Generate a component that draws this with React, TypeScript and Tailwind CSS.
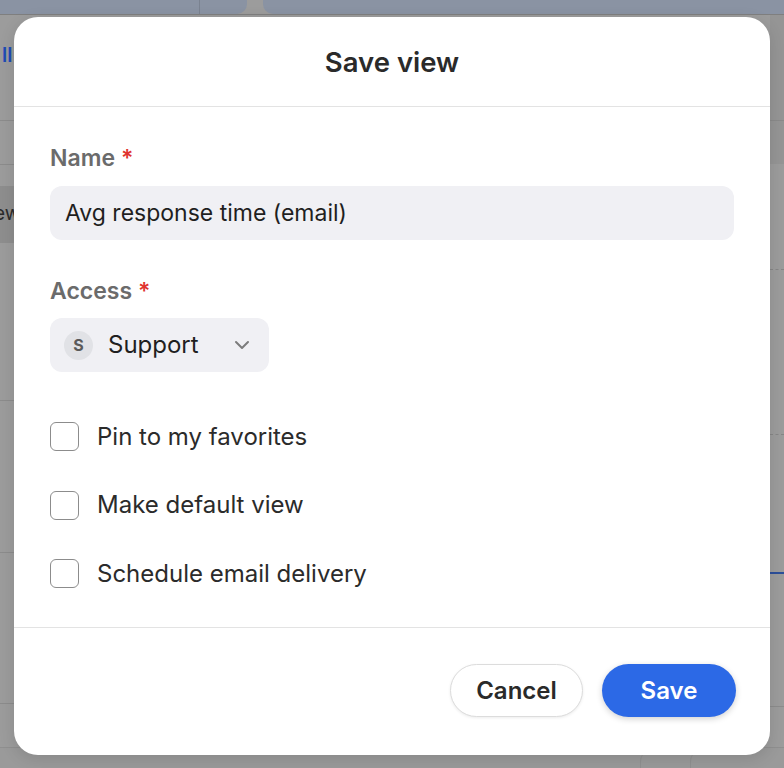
import { ChevronDown } from "lucide-react";

const font = { fontFamily: "Inter, 'Noto Sans', sans-serif" };

function Backdrop() {
  return (
    <div className="absolute inset-0">
      {/* top toolbar strip */}
      <div className="flex h-[15px] gap-[16px] border-b border-[#7f7f7f] bg-[#9c9c9c]">
        <div className="flex w-[247px] rounded-br-[10px] bg-[#8a93a3]">
          <div className="w-[200px] border-r border-[#7a8290]" />
        </div>
        <div className="flex-1 rounded-bl-[10px] bg-[#8a93a3]" />
      </div>

      <div className="absolute left-[2px] top-[40px] text-[20px] font-semibold text-[#1f4bb5]">ll</div>

      {/* left edge rows */}
      <div className="absolute left-0 top-[120px] h-px w-[14px] bg-[#8c8c8c]" />
      <div className="absolute left-0 top-[164px] h-px w-[14px] bg-[#8c8c8c]" />
      <div className="absolute left-0 top-[186px] flex h-[57px] w-[14px] items-center overflow-hidden bg-[#8e8e8e]">
        <span className="ml-[-6px] text-[19px] text-[#2b2b2b]">ew</span>
      </div>
      <div className="absolute left-0 top-[400px] h-px w-[14px] bg-[#8c8c8c]" />
      <div className="absolute left-0 top-[552px] h-px w-[14px] bg-[#8c8c8c]" />
      <div className="absolute left-0 top-[703px] h-px w-[14px] bg-[#8c8c8c]" />

      {/* right edge rows */}
      <div className="absolute right-0 top-[15px] h-[149px] w-[14px] bg-[#959595]" />
      <div className="absolute right-0 top-[120px] h-px w-[14px] bg-[#8a8a8a]" />
      <div className="absolute right-0 top-[269px] w-[14px] border-t border-dashed border-[#868686]" />
      <div className="absolute right-0 top-[434px] w-[14px] border-t border-dashed border-[#868686]" />
      <div className="absolute right-0 top-[572px] h-[2px] w-[14px] bg-[#2c4f9a]" />
      <div className="absolute right-0 top-[706px] h-px w-[14px] bg-[#8c8c8c]" />

      {/* bottom strip */}
      <div className="absolute bottom-0 left-0 right-0 flex h-[21px] border-t border-[#8f8f8f] bg-[#9a9a9a]">
        <div className="ml-[640px] w-[50px] rounded-tl-[14px] border-l border-t border-[#909090]" />
        <div className="w-[50px] rounded-tl-[14px] border-l border-t border-[#909090]" />
      </div>
    </div>
  );
}

function Checkbox({ label }: { label: string }) {
  return (
    <label className="flex h-[29px] items-center gap-[18px]">
      <span className="h-[29px] w-[29px] rounded-[6px] border-[1.5px] border-[#8c8c8c] bg-white" />
      <span className="text-[24px] text-[#2b2b2b]">{label}</span>
    </label>
  );
}

export default function App() {
  return (
    <div className="relative h-[768px] w-full overflow-hidden bg-[#9c9c9c]" style={font}>
      <Backdrop />

      <div className="absolute left-[14px] top-[17px] flex h-[738px] w-[756px] flex-col rounded-[24px] bg-white shadow-[0_4px_16px_rgba(0,0,0,0.12)]">
        <div className="flex h-[90px] items-center justify-center border-b border-[#e3e3e3] pt-[2px]">
          <h1 className="text-[27.5px] font-semibold text-[#2a2a2a]">Save view</h1>
        </div>

        <div className="flex flex-col px-[36px] pb-[39px] pt-[37px]">
          <div className="flex h-[28px] items-center text-[23px] font-semibold text-[#6b6b6b]">
            Name <span className="ml-[6px] text-[#e0342f]">*</span>
          </div>
          <div className="mt-[14px] flex h-[54px] items-center rounded-[12px] bg-[#f0f0f4] px-[15px] text-[23px] text-[#1f1f1f]">
            Avg response time (email)
          </div>

          <div className="mt-[37px] flex h-[28px] items-center text-[23px] font-semibold text-[#6b6b6b]">
            Access <span className="ml-[6px] text-[#e0342f]">*</span>
          </div>
          <div className="mt-[13px] flex h-[54px] w-[219px] items-center rounded-[12px] bg-[#f0f0f4] pl-[14px] pr-[15px]">
            <span className="flex h-[29px] w-[29px] items-center justify-center rounded-full bg-[#e1e2e6] text-[16px] font-bold text-[#5a5a5a]">
              S
            </span>
            <span className="ml-[15px] text-[24px] text-[#1f1f1f]">Support</span>
            <ChevronDown className="ml-auto h-[24px] w-[24px] text-[#7c7c7c]" strokeWidth={2} />
          </div>

          <div className="mt-[50px] flex flex-col gap-[39.5px]">
            <Checkbox label="Pin to my favorites" />
            <Checkbox label="Make default view" />
            <Checkbox label="Schedule email delivery" />
          </div>
        </div>

        <div className="flex flex-1 items-start justify-end gap-[19px] border-t border-[#e3e3e3] pr-[34px] pt-[36px]">
          <button className="h-[53px] w-[133px] rounded-full border border-[#dcdcdc] bg-white text-[24px] font-semibold text-[#2a2a2a] shadow-[0_1px_3px_rgba(0,0,0,0.08)]">
            Cancel
          </button>
          <button className="h-[53px] w-[134px] rounded-full bg-[#2c69e6] text-[24px] font-semibold text-white shadow-[0_2px_6px_rgba(0,0,0,0.18)]">
            Save
          </button>
        </div>
      </div>
    </div>
  );
}
